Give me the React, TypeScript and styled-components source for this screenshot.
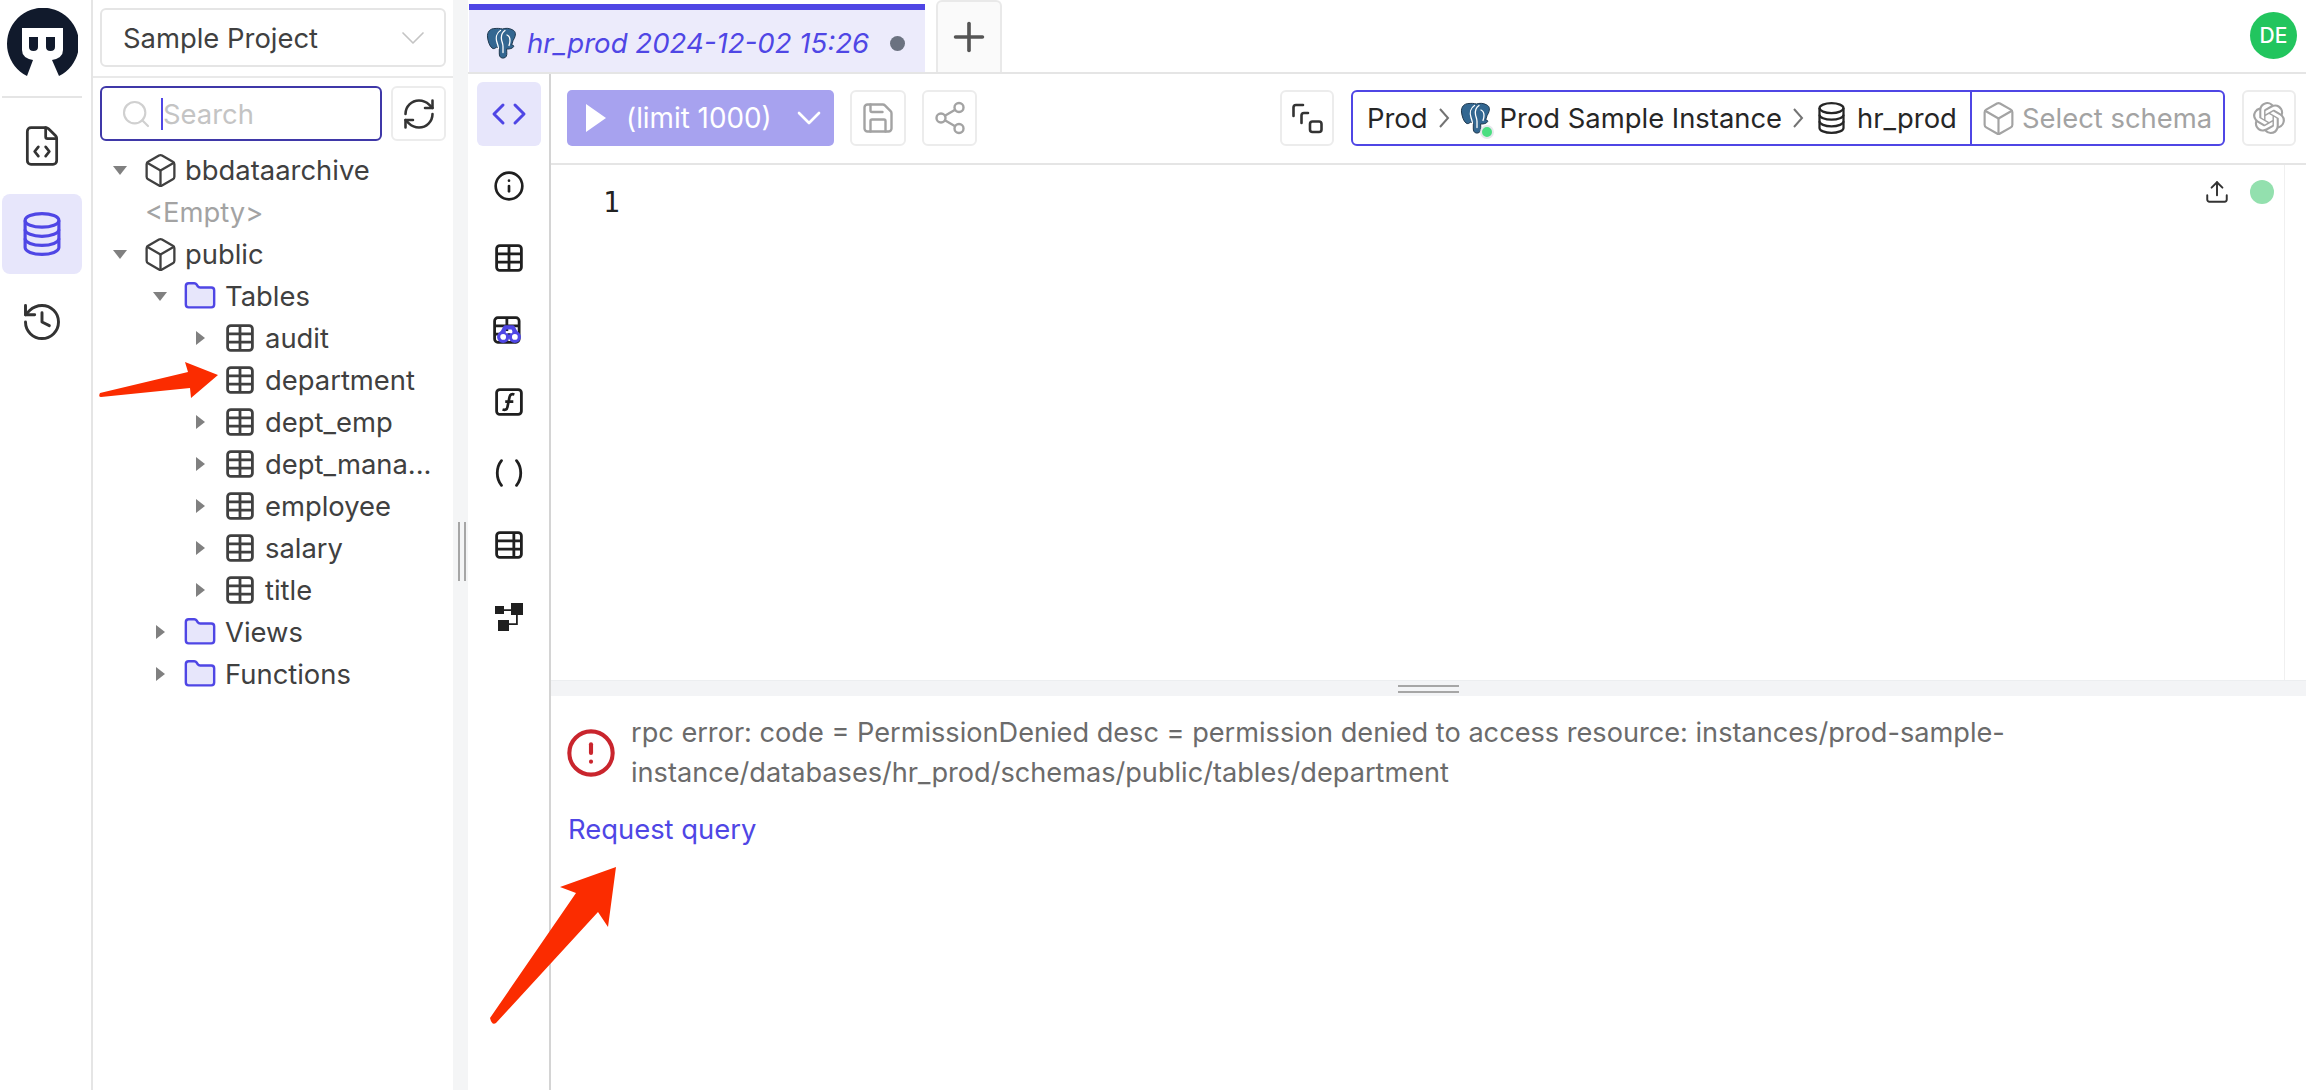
import React from "react";
import styled, { createGlobalStyle } from "styled-components";
import {
  Box,
  ChevronDown,
  CircleAlert,
  Code,
  FileCode,
  Folder,
  History,
  Info,
  Plus,
  RefreshCw,
  Save,
  Search,
  Share2,
  Upload,
} from "lucide-react";
import { SiOpenai } from "react-icons/si";

const GlobalStyle = createGlobalStyle`
  html, body {
    margin: 0;
    padding: 0;
    background: #fff;
  }
  body {
    font-family: Inter, "Liberation Sans", sans-serif;
    color: #262626;
    overflow: hidden;
  }
`;

const Page = styled.div`
  position: relative;
  display: flex;
  width: 2306px;
  height: 1090px;
  overflow: hidden;
  font-size: 27.4px;
`;

const IconRail = styled.nav`
  width: 93px;
  flex: none;
  box-sizing: border-box;
  border-right: 2px solid #e5e5e5;
  display: flex;
  flex-direction: column;
  align-items: flex-start;
  padding: 8px 0 0 2px;
`;
const Logo = styled.svg`
  width: 72px;
  height: 72px;
  margin-left: 4px;
`;
const RailDivider = styled.div`
  width: 80px;
  height: 2px;
  background: #e5e5e5;
  margin: 16px 0 8px;
`;
const RailButton = styled.div<{ $active?: boolean }>`
  width: 80px;
  height: 80px;
  display: flex;
  align-items: center;
  justify-content: center;
  border-radius: 8px;
  color: ${(p) => (p.$active ? "#4f46e5" : "#333")};
  background: ${(p) => (p.$active ? "#e7e6fb" : "transparent")};
  margin-bottom: 8px;
`;

const Sidebar = styled.aside`
  width: 360px;
  flex: none;
  display: flex;
  flex-direction: column;
`;
const ProjectHeader = styled.div`
  box-sizing: border-box;
  padding: 8px 7px 9px;
  border-bottom: 2px solid #e9e9e9;
  height: 78px;
`;
const ProjectSelect = styled.div`
  height: 59px;
  box-sizing: border-box;
  border: 2px solid #e5e5e5;
  border-radius: 6px;
  display: flex;
  align-items: center;
  justify-content: space-between;
  padding: 0 11px 0 21px;
  color: #404040;
`;
const SearchRow = styled.div`
  display: flex;
  gap: 9px;
  padding: 8px 7px 8px;
`;
const SearchBox = styled.div`
  flex: 1;
  height: 55px;
  box-sizing: border-box;
  border: 2px solid #3f38a8;
  border-radius: 6px;
  display: flex;
  align-items: center;
  padding-left: 18px;
  gap: 9px;
  color: #c4c4c4;
`;
const Caret = styled.span`
  border-left: 2px solid #4f46e5;
  height: 32px;
  display: flex;
  align-items: center;
`;
const SquareButton = styled.div<{ $w?: number; $muted?: boolean }>`
  width: ${(p) => p.$w ?? 55}px;
  height: ${(p) => (p.$w ? 56 : 55)}px;
  flex: none;
  box-sizing: border-box;
  border: 2px solid #ececec;
  border-radius: 6px;
  display: flex;
  align-items: center;
  justify-content: center;
  color: ${(p) => (p.$muted ? "#a3a3a3" : "#333")};
  svg {
    flex: none;
  }
`;
const Tree = styled.div`
  display: flex;
  flex-direction: column;
`;
const Row = styled.div<{ $depth: number }>`
  height: 42px;
  display: flex;
  align-items: center;
  padding-left: ${(p) => 7 + p.$depth * 40}px;
  color: #404040;
  white-space: nowrap;
`;
const Toggle = styled.span`
  width: 40px;
  flex: none;
  display: flex;
  justify-content: center;
  margin-right: 6px;
`;
const Triangle = styled.span<{ $open?: boolean }>`
  width: 0;
  height: 0;
  ${(p) =>
    p.$open
      ? `border-left: 7px solid transparent;
         border-right: 7px solid transparent;
         border-top: 9px solid #808080;`
      : `border-top: 7px solid transparent;
         border-bottom: 7px solid transparent;
         border-left: 9px solid #808080;`}
`;
const RowIcon = styled.span`
  width: 28px;
  height: 30px;
  flex: none;
  margin-right: 11px;
  display: flex;
  align-items: center;
  justify-content: center;
  color: #404040;
  svg {
    flex: none;
  }
`;
const EmptyNote = styled.div`
  height: 42px;
  display: flex;
  align-items: center;
  padding-left: 52px;
  color: #a3a3a3;
`;

const Gutter = styled.div`
  width: 15px;
  flex: none;
  background: #f4f5f6;
  display: flex;
  align-items: center;
  padding-left: 5px;
  box-sizing: border-box;
`;
const GutterGrip = styled.div`
  width: 4px;
  height: 59px;
  border-left: 2px solid #a6a6a6;
  border-right: 2px solid #a6a6a6;
  margin-top: 12px;
`;

const Main = styled.main`
  flex: 1;
  min-width: 0;
  display: flex;
  flex-direction: column;
`;
const TabBar = styled.div`
  height: 72px;
  flex: none;
  display: flex;
  align-items: flex-end;
  gap: 11px;
  padding-left: 1px;
  border-bottom: 2px solid #e5e5e5;
  position: relative;
`;
const ActiveTab = styled.div`
  width: 456px;
  height: 68px;
  box-sizing: border-box;
  border-top: 6px solid #4f46e5;
  background: #ecebfb;
  color: #4f46e5;
  font-style: italic;
  display: flex;
  align-items: center;
  padding: 4px 0 0 17px;
  white-space: nowrap;
  font-size: 27.6px;
`;
const TabText = styled.span`
  margin-left: 9px;
`;
const TabDot = styled.span`
  width: 15px;
  height: 15px;
  border-radius: 50%;
  background: #6b7280;
  margin-left: auto;
  margin-right: 20px;
`;
const AddTab = styled.div`
  width: 66px;
  height: 72px;
  box-sizing: border-box;
  border: 2px solid #e9e9e9;
  border-bottom: none;
  border-radius: 6px 6px 0 0;
  background: #fafafa;
  display: flex;
  align-items: center;
  justify-content: center;
  color: #555;
`;
const Avatar = styled.div`
  position: absolute;
  right: 9px;
  top: 12px;
  width: 47px;
  height: 47px;
  border-radius: 50%;
  background: #22c55e;
  color: #fff;
  display: flex;
  align-items: center;
  justify-content: center;
  font-size: 21px;
  font-weight: 500;
`;

const Workspace = styled.div`
  flex: 1;
  min-height: 0;
  display: flex;
`;
const ToolRail = styled.div`
  width: 80px;
  flex: none;
  margin-left: 1px;
  border-right: 2px solid #d4d4d4;
  display: flex;
  flex-direction: column;
  align-items: center;
  padding-top: 8px;
`;
const ToolButton = styled.div<{ $active?: boolean }>`
  width: 64px;
  height: 64px;
  margin-bottom: 7.9px;
  border-radius: 6px;
  display: flex;
  align-items: center;
  justify-content: center;
  color: ${(p) => (p.$active ? "#4f46e5" : "#1f1f1f")};
  background: ${(p) => (p.$active ? "#e7e6fb" : "transparent")};
`;

const Content = styled.div`
  flex: 1;
  min-width: 0;
  display: flex;
  flex-direction: column;
`;
const Toolbar = styled.div`
  flex: none;
  box-sizing: border-box;
  border-bottom: 2px solid #e5e5e5;
  height: 91px;
  display: flex;
  align-items: flex-start;
  padding: 16px 10px 0 16px;
`;
const RunButton = styled.div`
  width: 267px;
  height: 56px;
  flex: none;
  border-radius: 5px;
  background: #a7a2ef;
  color: #fff;
  display: flex;
  align-items: center;
  padding-left: 19px;
  box-sizing: border-box;
  font-size: 27.8px;
  margin-right: 16px;
  svg {
    flex: none;
  }
`;
const RunLabel = styled.span`
  margin: 0 17px 0 20px;
  white-space: nowrap;
`;
const ToolbarGap = styled.div`
  width: 16px;
  flex: none;
`;
const Spacer = styled.div`
  flex: 1;
`;
const Breadcrumb = styled.div`
  width: 874px;
  height: 56px;
  flex: none;
  box-sizing: border-box;
  margin: 0 17px;
  border: 2px solid #4f46e5;
  border-radius: 6px;
  display: flex;
  align-items: center;
  color: #262626;
  white-space: nowrap;
`;
const CrumbPath = styled.div`
  width: 619px;
  flex: none;
  box-sizing: border-box;
  height: 100%;
  padding-left: 14px;
  display: flex;
  align-items: center;
  border-right: 2px solid #4f46e5;
`;
const CrumbSep = styled.svg`
  width: 12px;
  height: 22px;
  margin: 0 10px;
  flex: none;
`;
const CrumbDb = styled.span`
  display: flex;
  margin-left: 4px;
`;
const CrumbLabel = styled.span`
  margin-left: 12px;
`;
const CrumbSchema = styled.div`
  flex: 1;
  display: flex;
  align-items: center;
  gap: 5px;
  padding-left: 8px;
  color: #a3a3a3;
`;
const InstanceIcon = styled.span`
  position: relative;
  display: flex;
  width: 32px;
  margin-right: 8px;
`;
const OnlineDot = styled.span`
  position: absolute;
  right: -2px;
  bottom: -5px;
  width: 10px;
  height: 10px;
  border-radius: 50%;
  background: #4ade80;
  border: 2px solid #e5e7eb;
`;

const Editor = styled.div`
  flex: 1;
  min-height: 0;
  display: flex;
  padding: 23px 0 0 55px;
`;
const LineNumber = styled.span`
  font-family: "DejaVu Sans Mono", monospace;
  font-size: 28px;
  color: #222;
  line-height: 30px;
  margin-left: -3px;
`;
const EditorActions = styled.div`
  display: flex;
  align-items: center;
  height: 30px;
  gap: 20px;
  margin: -11px 0 0 auto;
  color: #333;
`;
const StatusDot = styled.span`
  width: 24px;
  height: 24px;
  border-radius: 50%;
  background: #93e0ae;
`;
const ScrollTrack = styled.div`
  width: 21px;
  margin: -23px 0 0 10px;
  border-left: 1px solid #f0f0f0;
`;
const SplitBar = styled.div`
  height: 16px;
  flex: none;
  background: #f3f4f6;
  border-top: 1px solid #eceef0;
  box-sizing: border-box;
  display: flex;
  align-items: center;
  justify-content: center;
`;
const SplitGrip = styled.div`
  width: 61px;
  height: 4px;
  border-top: 2px solid #a6a6a6;
  border-bottom: 2px solid #a6a6a6;
`;
const Result = styled.div`
  height: 394px;
  flex: none;
  box-sizing: border-box;
  padding: 17px 0 0 17px;
`;
const ErrorRow = styled.div`
  display: flex;
  align-items: center;
  gap: 14px;
  svg {
    flex: none;
    margin-left: -3px;
  }
`;
const ErrorText = styled.div`
  width: 1400px;
  color: #6b6b6b;
  font-size: 27.15px;
  line-height: 40px;
`;
const RequestLink = styled.div`
  margin-top: 16px;
  color: #4f46e5;
  line-height: 40px;
`;
const Annotations = styled.svg`
  position: absolute;
  inset: 0;
  width: 2306px;
  height: 1090px;
  pointer-events: none;
`;

const ElephantIcon = () => (
  <svg width={32} height={32} viewBox="0 0 32 32">
    <path
      d="M9 1.500C4 1.500 1 5 1.500 10c.4 4 2 9 4.500 11 1.500 1.200 3.500.6 4.500-1 1 .7 2 1 2.800 1v6c0 3 2 4.500 4.500 4 2.500-.5 3.200-2.500 3-5.500l-.2-3.500c3 .2 6-.6 7-2.300.6-1-.6-1.700-2-1.700l1.500-4.500C30.500 8 30 4.500 26.500 2.800 23 1 19.500 1 16.500 2 14 1.300 11.500 1.300 9 1.500Z"
      fill="#336791"
      stroke="#20394f"
      strokeWidth="1"
    />
    <path
      d="M14.500 3.500C10.500 6 9.500 11 11 15.500c.6 2 1.500 4 1.500 6M19 3.500c-3 2-4 5.500-3.500 9 .3 2.500 1.500 4 1.500 7v6M21 8c2 .8 3 3 3 5.500 0 2-.5 3.500-1 5"
      fill="none"
      stroke="#fff"
      strokeWidth="1.300"
      strokeLinecap="round"
    />
  </svg>
);

// three stacked discs, lucide's Database only has two bands
const DatabaseIcon = ({ width, height, color = "currentColor" }: { width: number; height: number; color?: string }) => (
  <svg width={width} height={height} viewBox="0 0 36 42" fill="none" stroke={color} strokeWidth="3" preserveAspectRatio="none">
    <ellipse cx="18" cy="8" rx="16" ry="6.500" />
    <path d="M2 8v26c0 3.600 7.200 6.500 16 6.500s16-2.900 16-6.500V8" />
    <path d="M2 16.700c0 3.600 7.200 6.500 16 6.500s16-2.900 16-6.500" />
    <path d="M2 25.400c0 3.600 7.200 6.500 16 6.500s16-2.900 16-6.500" />
  </svg>
);

const TableIcon = ({ size = 28 }: { size?: number }) => (
  <svg width={size} height={size} viewBox="0 0 26 26" fill="none" stroke="currentColor" strokeWidth="2.6">
    <rect x="1.500" y="1.500" width="23" height="23" rx="3" />
    <path d="M13 1.500v23M1.500 9.200h23M1.500 16.800h23" />
  </svg>
);

const TableColIcon = () => (
  <svg width={28} height={28} viewBox="0 0 26 26" fill="none" stroke="currentColor" strokeWidth="2.6">
    <rect x="1.500" y="1.500" width="23" height="23" rx="3" />
    <path d="M17.500 1.500v23M1.500 9.200h23M1.500 16.800h23" />
  </svg>
);

const ExternalTableIcon = () => (
  <svg width={32} height={28} viewBox="0 0 30 26" fill="none" stroke="currentColor" strokeWidth="2.6">
    <rect x="1.500" y="1.500" width="23" height="23" rx="3" />
    <path d="M13 1.500v23M1.500 9.200h23M1.500 16.800h23" />
    <path d="M8 17l3.500-6.500h7L22 17" stroke="#4f46e5" strokeWidth="4" strokeLinejoin="round" />
    <circle cx="9.500" cy="19.500" r="4.200" fill="#fff" stroke="#4f46e5" strokeWidth="3" />
    <circle cx="20.500" cy="19.500" r="4.200" fill="#fff" stroke="#4f46e5" strokeWidth="3" />
    <path d="M12 15h6" stroke="#fff" strokeWidth="2" />
  </svg>
);

const FunctionIcon = () => (
  <svg width={28} height={28} viewBox="0 0 26 26" fill="none" stroke="currentColor" strokeWidth="2.6">
    <rect x="1.500" y="1.500" width="23" height="23" rx="3" />
    <path d="M18 6c-2.500-.8-4 .2-4.500 2.400l-2 9.400c-.5 2.200-2 3-4.500 2.200M9.500 12.600h7.500" strokeWidth="2.500" />
  </svg>
);

const ParensIcon = () => (
  <svg width={28} height={28} viewBox="0 0 26 26" fill="none" stroke="currentColor" strokeWidth="2.6" strokeLinecap="round">
    <path d="M6 1.500C.8 8 .8 18 6 24.500M20 1.500c5.200 6.500 5.200 16.500 0 23" />
  </svg>
);

const DiagramIcon = () => (
  <svg width={28} height={28} viewBox="0 0 28 28" fill="currentColor" stroke="none">
    <rect x="0" y="3" width="9" height="8" />
    <rect x="16" y="0" width="12" height="12" />
    <rect x="3" y="17" width="11" height="11" />
    <path d="M9 6.200h7v1.800H9zM21 12h1.800v10H14v-1.800h7z" />
  </svg>
);

const SwitchIcon = () => (
  <svg width={34} height={32} viewBox="0 0 34 32" fill="none" stroke="currentColor" strokeWidth="2.6" strokeLinecap="round">
    <path d="M13 3H6a2.500 2.500 0 0 0-2.500 2.500V14" />
    <path d="M18 11h-4a2.500 2.500 0 0 0-2.500 2.500V21" />
    <rect x="20" y="19.500" width="11.500" height="10.500" rx="2.500" />
  </svg>
);

const TreeFolder = () => (
  <Folder size={34} strokeWidth={1.7} color="#4f46e5" fill="#e7e6fb" />
);

const Caretless = ({ open }: { open?: boolean }) => (
  <Toggle>
    <Triangle $open={open} />
  </Toggle>
);

const tables = [
  { name: "audit", leaf: false },
  { name: "department", leaf: true },
  { name: "dept_emp", leaf: false },
  { name: "dept_mana...", leaf: false },
  { name: "employee", leaf: false },
  { name: "salary", leaf: false },
  { name: "title", leaf: false },
];

export default function App() {
  return (
    <Page>
      <GlobalStyle />
      <IconRail>
        <Logo viewBox="6 8 72 72">
          <path d="M59 76A36 36 0 1 0 27 76L33 60H52Z" fill="#111a2c" />
          <path d="M22 28H63V50Q63 58 52 60H33Q22 58 22 50Z" fill="#fff" />
          <path d="M29 37H38V47Q38 51 33.500 51T29 47ZM46 37H55V47Q55 51 50.500 51T46 47Z" fill="#111a2c" />
        </Logo>
        <RailDivider />
        <RailButton>
          <FileCode size={44} strokeWidth={1.5} />
        </RailButton>
        <RailButton $active>
          <DatabaseIcon width={38} height={44} />
        </RailButton>
        <RailButton>
          <History size={44} strokeWidth={1.6} />
        </RailButton>
      </IconRail>

      <Sidebar>
        <ProjectHeader>
          <ProjectSelect>
            Sample Project
            <ChevronDown size={40} color="#c4c4c4" strokeWidth={1} />
          </ProjectSelect>
        </ProjectHeader>
        <SearchRow>
          <SearchBox>
            <Search size={32} strokeWidth={1.6} color="#d0d0d0" />
            <Caret>Search</Caret>
          </SearchBox>
          <SquareButton>
            <RefreshCw size={36} strokeWidth={1.7} />
          </SquareButton>
        </SearchRow>
        <Tree>
          <Row $depth={0}>
            <Caretless open />
            <RowIcon>
              <Box size={37} strokeWidth={1.5} />
            </RowIcon>
            bbdataarchive
          </Row>
          <EmptyNote>&lt;Empty&gt;</EmptyNote>
          <Row $depth={0}>
            <Caretless open />
            <RowIcon>
              <Box size={37} strokeWidth={1.5} />
            </RowIcon>
            public
          </Row>
          <Row $depth={1}>
            <Caretless open />
            <RowIcon>
              <TreeFolder />
            </RowIcon>
            Tables
          </Row>
          {tables.map((t) => (
            <Row $depth={2} key={t.name}>
              {t.leaf ? <Toggle /> : <Caretless />}
              <RowIcon>
                <TableIcon />
              </RowIcon>
              {t.name}
            </Row>
          ))}
          <Row $depth={1}>
            <Caretless />
            <RowIcon>
              <TreeFolder />
            </RowIcon>
            Views
          </Row>
          <Row $depth={1}>
            <Caretless />
            <RowIcon>
              <TreeFolder />
            </RowIcon>
            Functions
          </Row>
        </Tree>
      </Sidebar>

      <Gutter>
        <GutterGrip />
      </Gutter>

      <Main>
        <TabBar>
          <ActiveTab>
            <ElephantIcon />
            <TabText>hr_prod 2024-12-02 15:26</TabText>
            <TabDot />
          </ActiveTab>
          <AddTab>
            <Plus size={46} strokeWidth={1.9} />
          </AddTab>
          <Avatar>DE</Avatar>
        </TabBar>
        <Workspace>
          <ToolRail>
            <ToolButton $active>
              <Code size={36} strokeWidth={2} color="#4f46e5" />
            </ToolButton>
            <ToolButton>
              <Info size={32} strokeWidth={2} />
            </ToolButton>
            <ToolButton>
              <TableIcon />
            </ToolButton>
            <ToolButton>
              <ExternalTableIcon />
            </ToolButton>
            <ToolButton>
              <FunctionIcon />
            </ToolButton>
            <ToolButton>
              <ParensIcon />
            </ToolButton>
            <ToolButton>
              <TableColIcon />
            </ToolButton>
            <ToolButton>
              <DiagramIcon />
            </ToolButton>
          </ToolRail>
          <Content>
            <Toolbar>
              <RunButton>
                <svg width="20" height="28" viewBox="0 0 20 28">
                  <path d="M0 0l20 14L0 28Z" fill="#fff" />
                </svg>
                <RunLabel>(limit 1000)</RunLabel>
                <ChevronDown size={40} strokeWidth={1.6} />
              </RunButton>
              <SquareButton $w={56} $muted>
                <Save size={36} strokeWidth={1.6} />
              </SquareButton>
              <ToolbarGap />
              <SquareButton $w={55} $muted>
                <Share2 size={36} strokeWidth={1.6} />
              </SquareButton>
              <Spacer />
              <SquareButton $w={54}>
                <SwitchIcon />
              </SquareButton>
              <Breadcrumb>
                <CrumbPath>
                  Prod
                  <CrumbSep viewBox="0 0 12 22" fill="none" stroke="#737373" strokeWidth="2">
                    <path d="M2 2l8 9-8 9" />
                  </CrumbSep>
                  <InstanceIcon>
                    <ElephantIcon />
                    <OnlineDot />
                  </InstanceIcon>
                  Prod Sample Instance
                  <CrumbSep viewBox="0 0 12 22" fill="none" stroke="#737373" strokeWidth="2">
                    <path d="M2 2l8 9-8 9" />
                  </CrumbSep>
                  <CrumbDb>
                    <DatabaseIcon width={27} height={32} />
                  </CrumbDb>
                  <CrumbLabel>hr_prod</CrumbLabel>
                </CrumbPath>
                <CrumbSchema>
                  <Box size={37} strokeWidth={1.4} />
                  Select schema
                </CrumbSchema>
              </Breadcrumb>
              <SquareButton $w={54} $muted>
                <SiOpenai size={32} />
              </SquareButton>
            </Toolbar>
            <Editor>
              <LineNumber>1</LineNumber>
              <EditorActions>
                <Upload size={26} strokeWidth={1.8} />
                <StatusDot />
              </EditorActions>
              <ScrollTrack />
            </Editor>
            <SplitBar>
              <SplitGrip />
            </SplitBar>
            <Result>
              <ErrorRow>
                <CircleAlert size={52} color="#c9252d" strokeWidth={1.9} />
                <ErrorText>
                  rpc error: code = PermissionDenied desc = permission denied to access resource: instances/prod-sample-instance/databases/hr_prod/schemas/public/tables/department
                </ErrorText>
              </ErrorRow>
              <RequestLink>Request query</RequestLink>
            </Result>
          </Content>
        </Workspace>
      </Main>

      <Annotations viewBox="0 0 2306 1090">
        <path
          d="M218 375L185 362L188 372L100 393Q98 397 101 397L190 388L191 398Z"
          fill="#fb2c00"
        />
        <path
          d="M616 867L560 887L576 893L490 1018Q492 1026 496 1023L598 912L608 927Z"
          fill="#fb2c00"
        />
      </Annotations>
    </Page>
  );
}
